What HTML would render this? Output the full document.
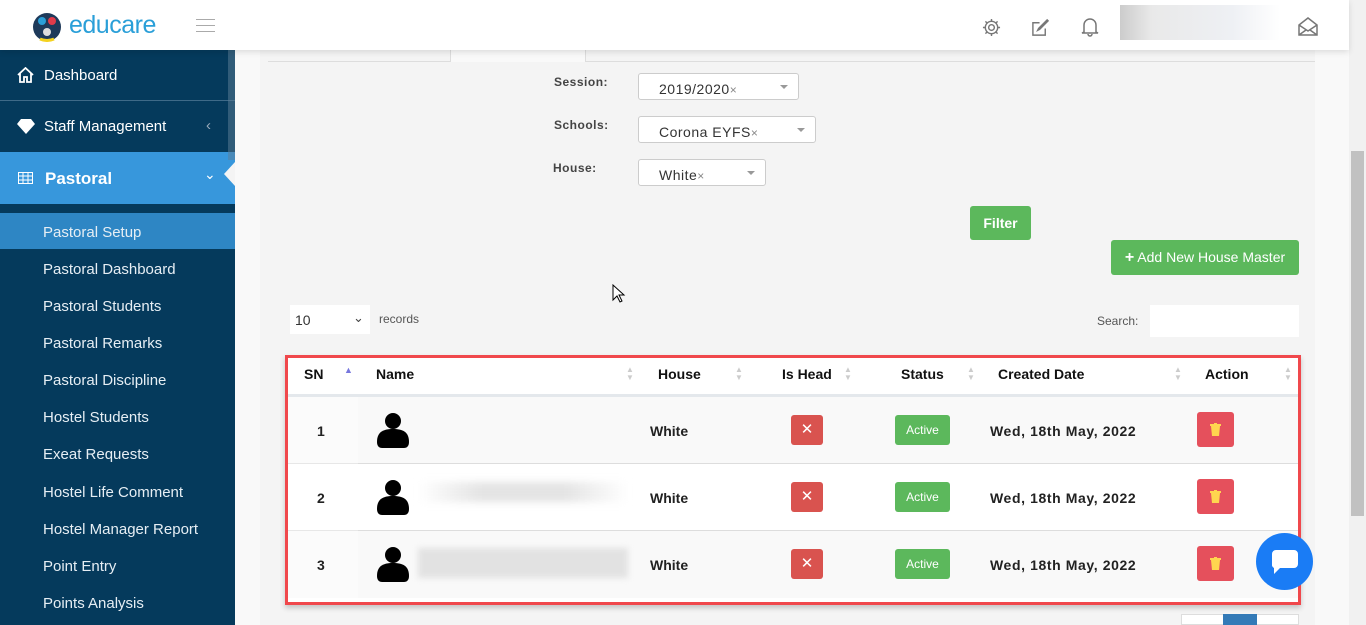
<!DOCTYPE html>
<html><head><style>
*{box-sizing:border-box;margin:0;padding:0}
body{width:1366px;height:625px;overflow:hidden;font-family:"Liberation Sans",sans-serif;background:#f9f9f9;position:relative}
.abs{position:absolute}
.top{left:0;top:0;width:1349px;height:50px;background:#fff;box-shadow:0 2px 6px rgba(0,0,0,.12);z-index:3}
.side{left:0;top:50px;width:235px;height:575px;background:#053a5c;color:#fff;z-index:2}
.side .it{position:absolute;left:0;width:235px;font-size:15px}
.sub{position:absolute;left:43px;font-size:15px;color:#e6eef4}
.panel{left:260px;top:50px;width:1055px;height:575px;background:#f4f4f4}
.lbl{font-size:12px;font-weight:bold;color:#444;letter-spacing:.5px}
.sel{background:#fff;border:1px solid #ccc;border-radius:3px;height:27px;font-size:14px;color:#333;padding:7px 0 0 20px;letter-spacing:.5px}
.sel .x{font-size:12px;color:#888}
.sel .c{position:absolute;right:10px;top:11px;border:4px solid transparent;border-top:4px solid #999}
.btn{background:#5cb85c;color:#fff;border-radius:3px;font-weight:bold;text-align:center}
.th{position:absolute;top:366px;font-size:14px;font-weight:bold;color:#111}
.arr{position:absolute;top:366px;color:#ccc;font-size:8px;line-height:8px}
.row{position:absolute;left:288px;width:1010px;border-top:1px solid #ddd}
.td{position:absolute;font-size:14px;font-weight:bold;color:#222}
.xb{position:absolute;left:791px;width:32px;height:30px;background:#d9534f;border-radius:3px;color:#fff;text-align:center;line-height:30px;font-size:15px}
.ab{position:absolute;left:895px;width:55px;height:30px;background:#5cb85c;border-radius:3px;color:#fff;text-align:center;line-height:30px;font-size:12px}
.db{position:absolute;left:1197px;width:37px;height:35px;background:#e5505c;border-radius:3px}
.av{position:absolute;left:376px;width:34px;height:36px}
</style></head><body>
<div class="abs top">
 <svg class="abs" style="left:32px;top:12px" width="30" height="30" viewBox="0 0 30 30"><circle cx="15" cy="15" r="14" fill="#1e3a5a"/><circle cx="10" cy="9" r="4" fill="#2a9fd8"/><circle cx="20" cy="9" r="4" fill="#e23b4a"/><circle cx="15" cy="20" r="4" fill="#ddd"/><path d="M8 27 Q15 30 22 27" stroke="#f4d21f" stroke-width="3" fill="none"/></svg>
 <div class="abs" style="left:69px;top:11px;font-size:25px;color:#2a9fd8;letter-spacing:-.5px">educare</div>
 <div class="abs" style="left:196px;top:19px;width:19px;height:1px;background:#aaa;box-shadow:0 6px 0 #aaa,0 12px 0 #aaa"></div>
 <svg class="abs" style="left:982px;top:18px" width="19" height="19" viewBox="0 0 20 20" fill="none" stroke="#777" stroke-width="1.5"><circle cx="10" cy="10" r="3"/><circle cx="10" cy="10" r="6.5"/><path d="M10 1v2.5M10 16.5v2.5M1 10h2.5M16.5 10h2.5M3.6 3.6l1.8 1.8M14.6 14.6l1.8 1.8M3.6 16.4l1.8-1.8M14.6 5.4l1.8-1.8"/></svg>
 <svg class="abs" style="left:1031px;top:18px" width="19" height="19" viewBox="0 0 20 20" fill="none" stroke="#777" stroke-width="1.5"><path d="M15 11v7H2V5h7M9 12l-2 1 1-2 9-9 1 1z"/></svg>
 <svg class="abs" style="left:1081px;top:17px" width="18" height="20" viewBox="0 0 18 20" fill="none" stroke="#777" stroke-width="1.5"><path d="M3 15V8a6 6 0 0112 0v7l2 1H1zM7 17a2 2 0 004 0"/></svg>
 <div class="abs" style="left:1120px;top:5px;width:160px;height:35px;background:linear-gradient(90deg,#ccc,#e9e9e9 20%,#eef0f4 70%,#fff)"></div>
 <svg class="abs" style="left:1298px;top:17px" width="20" height="19" viewBox="0 0 20 19" fill="none" stroke="#777" stroke-width="1.5"><path d="M1 8l9-7 9 7v10H1zM1 8l9 6 9-6M1 18l7-5M19 18l-7-5"/></svg>
</div>
<div class="abs side">
 <div class="it" style="top:0;height:51px;border-bottom:1px solid #3f6a88"><svg class="abs" style="left:17px;top:17px" width="17" height="16" viewBox="0 0 17 16" fill="none" stroke="#fff" stroke-width="1.8"><path d="M1 8L8.5 1 16 8M3 6v9h4v-5h3v5h4V6"/></svg><span class="abs" style="left:44px;top:17px">Dashboard</span></div>
 <div class="it" style="top:51px;height:51px"><svg class="abs" style="left:17px;top:18px" width="18" height="15" viewBox="0 0 18 15" fill="#fff"><path d="M4 0h10l4 5-9 10L0 5z"/></svg><span class="abs" style="left:44px;top:17px">Staff Management</span><span class="abs" style="left:206px;top:16px;color:#9ab">‹</span></div>
 <div class="it" style="top:102px;height:52px;background:#3797dc"><svg class="abs" style="left:18px;top:20px" width="15" height="12" viewBox="0 0 15 12" fill="#fff"><path d="M0 0h15v12H0z" fill="none" stroke="#fff" stroke-width="2"/><path d="M0 4h15M0 8h15M5 0v12M10 0v12" stroke="#fff"/></svg><span class="abs" style="left:45px;top:17px;font-weight:bold;font-size:17px">Pastoral</span><span class="abs" style="left:204px;top:14px;font-size:14px">⌄</span></div>
 <div class="abs" style="left:224px;top:112px;border:12px solid transparent;border-right:11px solid #f4f4f4;border-left:0"></div>
 <div class="abs" style="left:0;top:163px;width:235px;height:36px;background:#2e86c4"></div>
 <div class="sub" style="top:174px">Pastoral Setup</div>
 <div class="sub" style="top:211px">Pastoral Dashboard</div>
 <div class="sub" style="top:248px">Pastoral Students</div>
 <div class="sub" style="top:285px">Pastoral Remarks</div>
 <div class="sub" style="top:322px">Pastoral Discipline</div>
 <div class="sub" style="top:359px">Hostel Students</div>
 <div class="sub" style="top:396px">Exeat Requests</div>
 <div class="sub" style="top:434px">Hostel Life Comment</div>
 <div class="sub" style="top:471px">Hostel Manager Report</div>
 <div class="sub" style="top:508px">Point Entry</div>
 <div class="sub" style="top:545px">Points Analysis</div>
 <div class="abs" style="left:228px;top:0;width:7px;height:110px;background:#5d7d95;opacity:.5"></div>
</div>
<div class="abs panel"></div>
<div class="abs" style="left:268px;top:61px;width:1047px;height:1px;background:#ddd"></div>
<div class="abs" style="left:450px;top:50px;width:136px;height:12px;background:#f9f9f9;border-left:1px solid #ddd;border-right:1px solid #ddd"></div>
<div class="abs" style="left:1349px;top:0;width:17px;height:625px;background:#f1f1f1"></div>
<div class="abs" style="left:1351px;top:151px;width:13px;height:365px;background:#c1c1c1"></div>

<div class="abs lbl" style="left:554px;top:75px">Session:</div>
<div class="abs lbl" style="left:554px;top:118px">Schools:</div>
<div class="abs lbl" style="left:553px;top:161px">House:</div>
<div class="abs sel" style="left:638px;top:73px;width:161px">2019/2020<span class="x">×</span><span class="c"></span></div>
<div class="abs sel" style="left:638px;top:116px;width:178px">Corona EYFS<span class="x">×</span><span class="c"></span></div>
<div class="abs sel" style="left:638px;top:159px;width:128px">White<span class="x">×</span><span class="c"></span></div>
<div class="abs btn" style="left:970px;top:206px;width:61px;height:34px;line-height:34px;font-size:14px">Filter</div>
<div class="abs btn" style="left:1111px;top:240px;width:188px;height:35px;line-height:35px;font-size:14px;font-weight:normal"><b style="font-size:16px">+</b> Add New House Master</div>
<svg class="abs" style="left:612px;top:284px" width="14" height="20" viewBox="0 0 14 20"><path d="M1 1v15l4-4 3 6 2-1-3-6h5z" fill="#fff" stroke="#000"/></svg>

<div class="abs" style="left:290px;top:305px;width:80px;height:29px;background:#fff;font-size:14px;color:#333;padding:7px 0 0 5px">10<span class="abs" style="left:63px;top:5px;font-size:13px;color:#444">⌄</span></div>
<div class="abs" style="left:379px;top:312px;font-size:12px;color:#555">records</div>
<div class="abs" style="left:1097px;top:314px;font-size:12px;color:#555">Search:</div>
<div class="abs" style="left:1150px;top:305px;width:149px;height:32px;background:#fff"></div>

<div class="abs" style="left:285px;top:355px;width:1016px;height:250px;border:3px solid #f0484c;background:#fff;box-shadow:0 3px 5px rgba(0,0,0,.2)"></div>
<div class="abs" style="left:288px;top:394px;width:1010px;height:3px;background:#e4e8ec"></div>
<div class="row" style="top:397px;height:67px;background:#f9f9f9;border-top:0"></div>
<div class="row" style="top:463px;height:68px;background:#fff"></div>
<div class="row" style="top:530px;height:68px;background:#f9f9f9"></div>
<div class="abs" style="left:288px;top:397px;width:70px;height:201px;background:rgba(255,255,255,.3)"></div>
<div class="abs" style="left:418px;top:482px;width:210px;height:20px;background:linear-gradient(90deg,#fff,#e4e4e4 30%,#e4e4e4 70%,#fff);filter:blur(4px)"></div>
<div class="abs" style="left:418px;top:548px;width:210px;height:30px;background:#e2e2e2;filter:blur(3px)"></div>

<div class="th" style="left:304px">SN</div><div class="abs" style="left:344px;top:365px;color:#7777dd;font-size:9px">▲</div>
<div class="th" style="left:376px">Name</div>
<div class="th" style="left:658px">House</div>
<div class="th" style="left:782px">Is Head</div>
<div class="th" style="left:901px">Status</div>
<div class="th" style="left:998px">Created Date</div>
<div class="th" style="left:1205px">Action</div>
<div class="arr" style="left:626px">▲<br>▼</div><div class="arr" style="left:735px">▲<br>▼</div><div class="arr" style="left:844px">▲<br>▼</div><div class="arr" style="left:967px">▲<br>▼</div><div class="arr" style="left:1174px">▲<br>▼</div><div class="arr" style="left:1284px">▲<br>▼</div>

<div class="td" style="left:317px;top:423px">1</div><div class="td" style="left:317px;top:490px">2</div><div class="td" style="left:317px;top:557px">3</div>
<svg class="av" style="top:412px" viewBox="0 0 34 36"><circle cx="17" cy="9" r="8"/><path d="M1 30c0-10 6-13 16-13s16 3 16 13c0 4-2 6-5 6H6c-3 0-5-2-5-6z"/></svg>
<svg class="av" style="top:479px" viewBox="0 0 34 36"><circle cx="17" cy="9" r="8"/><path d="M1 30c0-10 6-13 16-13s16 3 16 13c0 4-2 6-5 6H6c-3 0-5-2-5-6z"/></svg>
<svg class="av" style="top:546px" viewBox="0 0 34 36"><circle cx="17" cy="9" r="8"/><path d="M1 30c0-10 6-13 16-13s16 3 16 13c0 4-2 6-5 6H6c-3 0-5-2-5-6z"/></svg>
<div class="td" style="left:650px;top:423px">White</div><div class="td" style="left:650px;top:490px">White</div><div class="td" style="left:650px;top:557px">White</div>
<div class="xb" style="top:415px">✕</div><div class="xb" style="top:482px">✕</div><div class="xb" style="top:549px">✕</div>
<div class="ab" style="top:415px">Active</div><div class="ab" style="top:482px">Active</div><div class="ab" style="top:549px">Active</div>
<div class="td" style="left:990px;top:423px;letter-spacing:.6px">Wed, 18th May, 2022</div><div class="td" style="left:990px;top:490px;letter-spacing:.6px">Wed, 18th May, 2022</div><div class="td" style="left:990px;top:557px;letter-spacing:.6px">Wed, 18th May, 2022</div>
<div class="db" style="top:412px"><svg class="abs" style="left:13px;top:11px" width="11" height="13" viewBox="0 0 11 13" fill="#ffd54f"><path d="M0 1h11v2H0zM4 0h3v1H4zM1 3h9l-1 10H2z"/></svg></div>
<div class="db" style="top:479px"><svg class="abs" style="left:13px;top:11px" width="11" height="13" viewBox="0 0 11 13" fill="#ffd54f"><path d="M0 1h11v2H0zM4 0h3v1H4zM1 3h9l-1 10H2z"/></svg></div>
<div class="db" style="top:546px"><svg class="abs" style="left:13px;top:11px" width="11" height="13" viewBox="0 0 11 13" fill="#ffd54f"><path d="M0 1h11v2H0zM4 0h3v1H4zM1 3h9l-1 10H2z"/></svg></div>

<div class="abs" style="left:1181px;top:614px;width:118px;height:11px;background:#fff;border:1px solid #ddd"></div>
<div class="abs" style="left:1223px;top:614px;width:34px;height:11px;background:#337ab7"></div>
<div class="abs" style="left:1256px;top:533px;width:57px;height:57px;border-radius:50%;background:#1a7cf5"><svg class="abs" style="left:14px;top:15px" width="30" height="28" viewBox="0 0 30 28"><path d="M6 2h18a4 4 0 014 4v10a4 4 0 01-4 4H10l-6 6v-6a4 4 0 01-2-4V6a4 4 0 014-4z" fill="#fff"/></svg></div>
</body></html>
